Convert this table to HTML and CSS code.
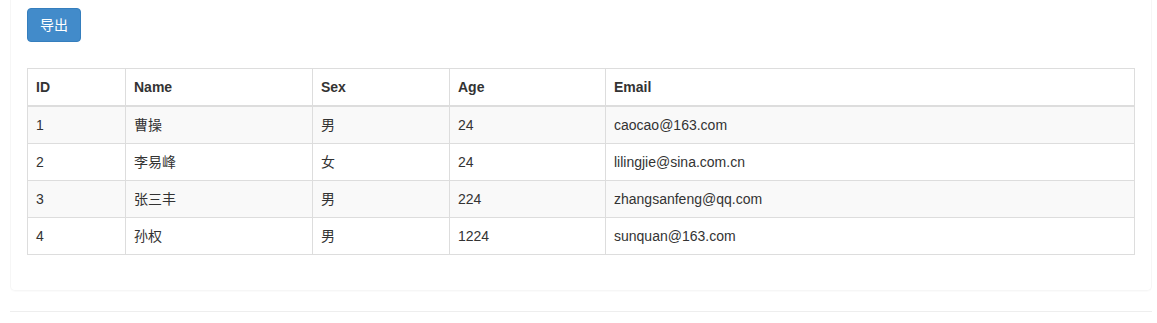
FILE: index.html
```html
<!DOCTYPE html>
<html lang="zh-CN">
<head>
<meta charset="utf-8">
<title>导出</title>
<link rel="stylesheet" href="styles.css">
</head>
<body>
<div class="page">
  <div class="panel">
    <div class="toolbar">
      <button class="btn btn-primary" type="button">导出</button>
    </div>
    <table class="table">
      <colgroup>
        <col class="c-id">
        <col class="c-name">
        <col class="c-sex">
        <col class="c-age">
        <col class="c-email">
      </colgroup>
      <thead>
        <tr><th>ID</th><th>Name</th><th>Sex</th><th>Age</th><th>Email</th></tr>
      </thead>
      <tbody>
        <tr><td>1</td><td>曹操</td><td>男</td><td>24</td><td>caocao@163.com</td></tr>
        <tr><td>2</td><td>李易峰</td><td>女</td><td>24</td><td>lilingjie@sina.com.cn</td></tr>
        <tr><td>3</td><td>张三丰</td><td>男</td><td>224</td><td>zhangsanfeng@qq.com</td></tr>
        <tr><td>4</td><td>孙权</td><td>男</td><td>1224</td><td>sunquan@163.com</td></tr>
      </tbody>
    </table>
  </div>
  <hr class="divider">
</div>
</body>
</html>
```

FILE: styles.css
```css
html, body {
  margin: 0;
  padding: 0;
  background: #fff;
}
body {
  font-family: "Liberation Sans", Arial, "Noto Sans CJK SC", sans-serif;
  font-size: 14px;
  line-height: 20px;
  color: #333;
}
.page {
  padding: 0 5px 0 10px;
}
.panel {
  border: 1px solid #f6f6f6;
  border-top: 0;
  border-radius: 0 0 5px 5px;
  box-shadow: 0 1px 1px rgba(0, 0, 0, 0.02);
  padding: 8px 16px 15px 16px;
}
.toolbar {
  display: flex;
  margin-bottom: 26px;
}
.btn {
  font-family: "Liberation Sans", Arial, "Noto Sans CJK SC", sans-serif;
  font-size: 14px;
  line-height: 20px;
  padding: 6px 12px;
  border-radius: 4px;
  border: 1px solid transparent;
  cursor: pointer;
}
.btn-primary {
  color: #fff;
  background-color: #428bca;
  border-color: #357ebd;
}
.table {
  width: 100%;
  table-layout: fixed;
  border-collapse: collapse;
  border-spacing: 0;
  border: 1px solid #ddd;
  margin-bottom: 20px;
}
.c-id { width: 98px; }
.c-name { width: 187px; }
.c-sex { width: 137px; }
.c-age { width: 156px; }
.table th,
.table td {
  padding: 8px;
  border: 1px solid #ddd;
  text-align: left;
  vertical-align: top;
  line-height: 20px;
}
.table th {
  font-weight: bold;
  border-bottom-width: 2px;
}
.table tbody tr:nth-child(odd) td {
  background-color: #f9f9f9;
}
.divider {
  margin: 20px 0 0 0;
  border: 0;
  border-top: 1px solid #eee;
  height: 0;
}
```
